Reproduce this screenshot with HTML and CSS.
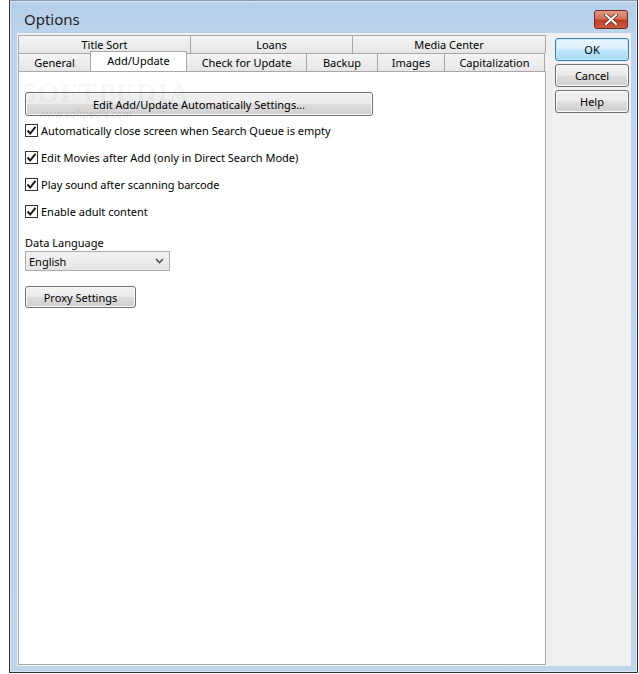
FILE: index.html
```html
<!DOCTYPE html>
<html lang="en">
<head>
  <meta charset="UTF-8">
  <title>Options</title>
  <link rel="stylesheet" href="styles.css">
</head>
<body>
  <div class="ventana">
    <div class="barra">
      <span class="titulo">Options</span>
      <span class="cerrar">
        <svg width="14" height="11" viewBox="0 0 14 11">
          <path d="M2 1 L12 10 M12 1 L2 10" stroke="#5a2018" stroke-width="3.6" stroke-linecap="round"/>
          <path d="M2 1 L12 10 M12 1 L2 10" stroke="#fff" stroke-width="2.2" stroke-linecap="round"/>
        </svg>
      </span>
    </div>
    <div class="cliente">
      <div class="pestanas">
        <div class="fila">
          <div class="tab" style="width:172px">Title Sort</div>
          <div class="tab" style="width:162px">Loans</div>
          <div class="tab" style="width:194px">Media Center</div>
        </div>
        <div class="fila">
          <div class="tab" style="width:72px">General</div>
          <div class="tab activa" style="width:97px">Add/Update</div>
          <div class="tab" style="width:120px">Check for Update</div>
          <div class="tab" style="width:71px">Backup</div>
          <div class="tab" style="width:67px">Images</div>
          <div class="tab" style="width:101px">Capitalization</div>
        </div>
        <div class="panel">
          <div class="marca">SOFTPEDIA<small>www.softpedia.com</small></div>
          <button class="boton ancho">Edit Add/Update Automatically Settings...</button>
          <label class="opcion"><span class="caja"><svg width="11" height="11" viewBox="0 0 11 11"><path d="M1.5 5.5 L4.2 8.5 L9.5 1.8" fill="none" stroke="#1a1a1a" stroke-width="2"/></svg></span>Automatically close screen when Search Queue is empty</label>
          <label class="opcion"><span class="caja"><svg width="11" height="11" viewBox="0 0 11 11"><path d="M1.5 5.5 L4.2 8.5 L9.5 1.8" fill="none" stroke="#1a1a1a" stroke-width="2"/></svg></span>Edit Movies after Add (only in Direct Search Mode)</label>
          <label class="opcion"><span class="caja"><svg width="11" height="11" viewBox="0 0 11 11"><path d="M1.5 5.5 L4.2 8.5 L9.5 1.8" fill="none" stroke="#1a1a1a" stroke-width="2"/></svg></span>Play sound after scanning barcode</label>
          <label class="opcion"><span class="caja"><svg width="11" height="11" viewBox="0 0 11 11"><path d="M1.5 5.5 L4.2 8.5 L9.5 1.8" fill="none" stroke="#1a1a1a" stroke-width="2"/></svg></span>Enable adult content</label>
          <div class="etiqueta">Data Language</div>
          <div class="combo">
            <span>English</span>
            <svg width="9" height="6" viewBox="0 0 9 6"><path d="M1 1 L4.5 4.5 L8 1" fill="none" stroke="#555" stroke-width="1.6"/></svg>
          </div>
          <button class="boton proxy">Proxy Settings</button>
        </div>
      </div>
      <div class="lateral">
        <button class="boton defecto">OK</button>
        <button class="boton">Cancel</button>
        <button class="boton">Help</button>
      </div>
    </div>
  </div>
</body>
</html>
```

FILE: styles.css
```css
body {
  margin: 0;
  background: #fff;
  font-family: "Noto Sans", "Open Sans", sans-serif;
  font-size: 11px;
  color: #000;
}
.ventana {
  margin-left: 9px;
  width: 629px;
  height: 673px;
  box-sizing: border-box;
  border: 1px solid #333;
  border-top-color: #8a9aae;
  background: linear-gradient(#b6cfe9, #bcd4ec 40px, #bed5ea);
  padding: 0 6px 6px 7px;
  display: flex;
  flex-direction: column;
  box-shadow: inset 0 0 0 1px #d8e6f4;
}
.barra {
  height: 32px;
  display: flex;
  align-items: flex-start;
  justify-content: space-between;
}
.titulo {
  margin: 8px 0 0 7px;
  font-size: 15px;
  color: #1e1e1e;
}
.cerrar {
  margin: 9px 3px 0 0;
  width: 34px;
  height: 19px;
  box-sizing: border-box;
  border: 1px solid #6b2a20;
  border-radius: 3px;
  background: linear-gradient(#e49a88, #cf6f58 45%, #bd3f26 55%, #cc5a43);
  display: flex;
  align-items: center;
  justify-content: center;
}
.cliente {
  flex: 1;
  background: #f0f0f0;
  display: flex;
  padding: 2px 0 1px 1px;
  gap: 9px;
}
.pestanas {
  width: 528px;
  display: flex;
  flex-direction: column;
}
.fila {
  display: flex;
  height: 18px;
}
.tab {
  box-sizing: border-box;
  border: 1px solid #a8a8a8;
  border-right: none;
  border-bottom: none;
  background: linear-gradient(#f4f4f4, #e6e6e6);
  text-align: center;
  padding-top: 1px;
  line-height: 16px;
}
.fila .tab:last-child {
  border-right: 1px solid #a8a8a8;
}
.activa {
  background: #fff;
  height: 20px;
  margin-top: -2px;
  padding-top: 1px;
  line-height: 15px;
  border-right: 1px solid #a8a8a8;
  margin-right: -1px;
  position: relative;
  z-index: 1;
}
.panel {
  flex: 1;
  background: #fff;
  border: 1px solid #a8a8a8;
  padding: 20px 6px;
  display: flex;
  flex-direction: column;
  align-items: flex-start;
  position: relative;
}
.marca {
  position: absolute;
  left: 2px;
  top: 6px;
  font-family: "Liberation Serif", serif;
  font-size: 28px;
  font-weight: bold;
  letter-spacing: 1px;
  color: rgba(0, 0, 0, 0.05);
  line-height: 30px;
}
.marca small {
  display: block;
  font-family: "Noto Sans", sans-serif;
  font-size: 10px;
  font-weight: normal;
  letter-spacing: 0;
  line-height: 12px;
  margin: 0 0 0 18px;
  color: rgba(0, 0, 0, 0.12);
}
.boton {
  font-family: inherit;
  font-size: 11px;
  color: #000;
  box-sizing: border-box;
  border: 1px solid #707070;
  border-radius: 3px;
  background: linear-gradient(#f2f2f2, #ebebeb 48%, #dddddd 52%, #cfcfcf);
  box-shadow: inset 0 0 0 1px #fbfbfb;
  padding: 0;
  height: 23px;
}
.ancho {
  width: 348px;
  height: 24px;
  margin-bottom: 1px;
}
.opcion {
  display: flex;
  align-items: center;
  height: 27px;
  white-space: nowrap;
}
.caja {
  width: 13px;
  height: 13px;
  box-sizing: border-box;
  border: 1px solid #333;
  background: #fff;
  margin-right: 3px;
  display: flex;
  align-items: center;
  justify-content: center;
}
.etiqueta {
  margin-top: 10px;
  line-height: 16px;
}
.combo {
  width: 145px;
  height: 20px;
  box-sizing: border-box;
  border: 1px solid #acacac;
  background: linear-gradient(#f2f2f2, #e5e5e5);
  display: flex;
  align-items: center;
  justify-content: space-between;
  padding: 0 5px 0 3px;
}
.proxy {
  margin-top: 15px;
  width: 111px;
  height: 22px;
}
.lateral {
  display: flex;
  flex-direction: column;
  gap: 3px;
  padding-top: 3px;
}
.lateral .boton {
  width: 74px;
  height: 23px;
}
.lateral .defecto {
  border-color: #3c7fb1;
  background: linear-gradient(#eaf6fd, #d9f0fc 48%, #bee6fd 52%, #a7d9f5);
  box-shadow: inset 0 0 0 1px #c8eafd;
}
```
